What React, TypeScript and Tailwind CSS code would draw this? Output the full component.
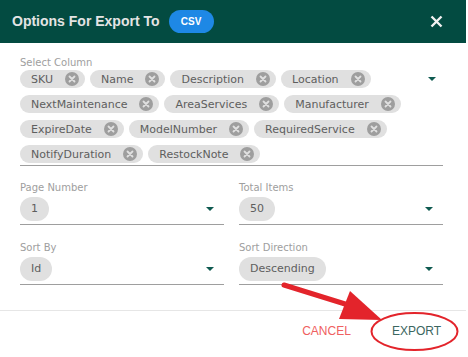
import React from "react";

const chipFont = { fontFamily: '"DejaVu Sans", sans-serif' };

function DelIcon() {
  return (
    <span className="flex h-[14px] w-[14px] items-center justify-center rounded-full bg-[#9e9e9e]">
      <svg width="8" height="8" viewBox="0 0 8 8">
        <path d="M1.5 1.5 L6.5 6.5 M6.5 1.5 L1.5 6.5" stroke="#e0e0e0" strokeWidth="1.8" strokeLinecap="round" />
      </svg>
    </span>
  );
}

function Chip({ label }: { label: string }) {
  return (
    <span className="flex h-[18px] items-center gap-[12px] rounded-full bg-[#e0e0e0] pl-[11px] pr-[6px] text-[11px] leading-none text-[#5e5e5e]" style={chipFont}>
      <span>{label}</span>
      <DelIcon />
    </span>
  );
}

function Caret() {
  return (
    <svg width="8" height="4" viewBox="0 0 8 4" className="shrink-0">
      <path d="M0 0 L8 0 L4 4 Z" fill="#0f5a50" />
    </svg>
  );
}

function SelectField({ label, value }: { label: string; value: string }) {
  return (
    <div className="flex flex-col">
      <div className="h-[12px] text-[10px] leading-[12px] text-[#9e9e9e]" style={chipFont}>{label}</div>
      <div className="mt-[3px] flex items-center justify-between border-b border-[#9e9e9e] pb-[3px] pr-[10px]">
        <span className="flex h-[24px] items-center rounded-full bg-[#e0e0e0] px-[11px] text-[11px] text-[#5e5e5e]" style={chipFont}>{value}</span>
        <Caret />
      </div>
    </div>
  );
}

export default function App() {
  const chips = [
    "SKU", "Name", "Description", "Location", "NextMaintenance", "AreaServices", "Manufacturer",
    "ExpireDate", "ModelNumber", "RequiredService", "NotifyDuration", "RestockNote",
  ];
  return (
    <div className="relative h-[357px] w-[468px] bg-white">
      <div className="w-[466px]">
        <div className="flex h-[43px] items-center justify-between bg-[#034b41] pl-[12px] pr-[23px]">
          <div className="flex items-center gap-[9px]">
            <span className="text-[14px] font-bold text-[#e4e4e4]" style={{ fontFamily: '"Liberation Sans", Arial, sans-serif' }}>
              Options For Export To
            </span>
            <span className="flex h-[23px] w-[45px] items-center justify-center rounded-full bg-[#1e88e5] text-[10px] font-bold text-white" style={{ fontFamily: '"Liberation Sans", Arial, sans-serif' }}>
              CSV
            </span>
          </div>
          <svg width="13" height="13" viewBox="0 0 13 13">
            <path d="M1.5 1.5 L11.5 11.5 M11.5 1.5 L1.5 11.5" stroke="#f2f2f2" strokeWidth="2.4" />
          </svg>
        </div>

        <div className="pl-[20px] pr-[23px] pt-[14px]">
          <div className="h-[12px] text-[10px] leading-[12px] text-[#9e9e9e]" style={chipFont}>Select Column</div>
          <div className="mt-[1px] flex items-start justify-between border-b border-[#9e9e9e] pb-[2px] pr-[7px]">
            <div className="flex w-[400px] flex-wrap gap-x-[5px] gap-y-[7px]">
              {chips.map((c) => (
                <Chip key={c} label={c} />
              ))}
            </div>
            <div className="pt-[7px]">
              <Caret />
            </div>
          </div>

          <div className="mt-[16px] grid grid-cols-2 gap-x-[15px] gap-y-[17px]">
            <SelectField label="Page Number" value="1" />
            <SelectField label="Total Items" value="50" />
            <SelectField label="Sort By" value="Id" />
            <SelectField label="Sort Direction" value="Descending" />
          </div>
        </div>

        <div className="mt-[25px] border-t border-[#e6e6e6]">
          <div className="flex h-[40px] items-center justify-end gap-[41px] pr-[25px] text-[12px]" style={{ fontFamily: '"Liberation Sans", Arial, sans-serif' }}>
            <span className="text-[#ef6060]">CANCEL</span>
            <span className="text-[#3b6660]">EXPORT</span>
          </div>
        </div>
      </div>

      <svg className="pointer-events-none absolute left-0 top-0" width="468" height="357" viewBox="0 0 468 357">
        <line x1="284" y1="285" x2="358" y2="308" stroke="#e3242b" strokeWidth="5" strokeLinecap="round" />
        <path d="M382 320 L350 291 L339 319 Z" fill="#e3242b" />
        <ellipse cx="414.5" cy="331.5" rx="43" ry="18.5" fill="none" stroke="#e3242b" strokeWidth="2" />
      </svg>
    </div>
  );
}
